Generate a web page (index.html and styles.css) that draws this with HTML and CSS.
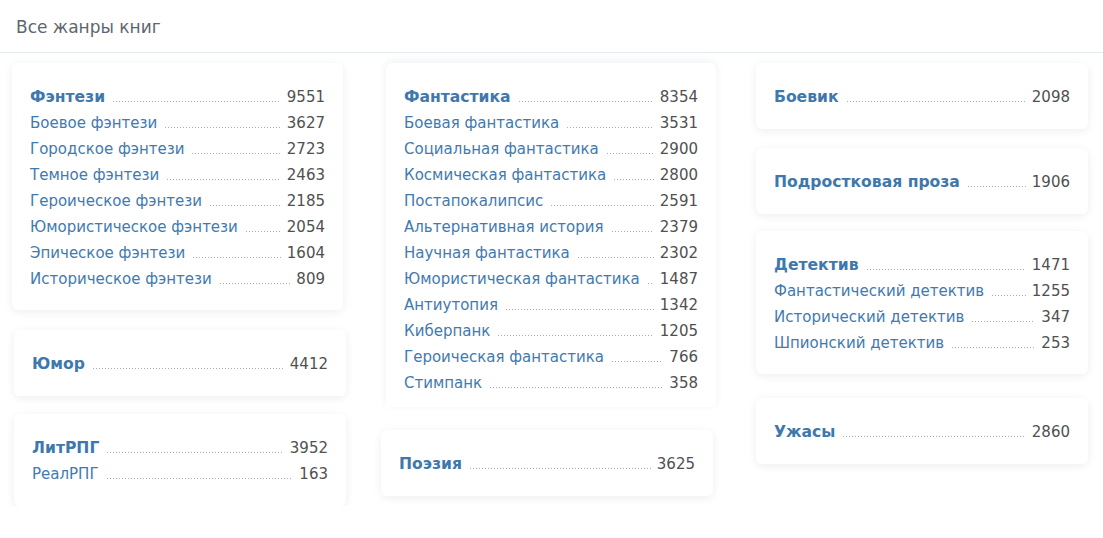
FILE: index.html
```html
<!DOCTYPE html>
<html lang="ru">
<head>
<meta charset="utf-8">
<title>Все жанры книг</title>
<link rel="stylesheet" href="styles.css">
</head>
<body>
<header class="page-head">Все жанры книг</header>
<main class="genres">
  <div class="col col-1">
    <section class="card">
      <div class="row row-main"><a class="name">Фэнтези</a><span class="dots"></span><span class="num">9551</span></div>
      <div class="row"><a class="name">Боевое фэнтези</a><span class="dots"></span><span class="num">3627</span></div>
      <div class="row"><a class="name">Городское фэнтези</a><span class="dots"></span><span class="num">2723</span></div>
      <div class="row"><a class="name">Темное фэнтези</a><span class="dots"></span><span class="num">2463</span></div>
      <div class="row"><a class="name">Героическое фэнтези</a><span class="dots"></span><span class="num">2185</span></div>
      <div class="row"><a class="name">Юмористическое фэнтези</a><span class="dots"></span><span class="num">2054</span></div>
      <div class="row"><a class="name">Эпическое фэнтези</a><span class="dots"></span><span class="num">1604</span></div>
      <div class="row"><a class="name">Историческое фэнтези</a><span class="dots"></span><span class="num">809</span></div>
    </section>
    <section class="card card-single card-humor">
      <div class="row row-main"><a class="name">Юмор</a><span class="dots"></span><span class="num">4412</span></div>
    </section>
    <section class="card card-litrpg">
      <div class="row row-main"><a class="name">ЛитРПГ</a><span class="dots"></span><span class="num">3952</span></div>
      <div class="row"><a class="name">РеалРПГ</a><span class="dots"></span><span class="num">163</span></div>
    </section>
  </div>
  <div class="col col-2">
    <section class="card card-cut">
      <div class="row row-main"><a class="name">Фантастика</a><span class="dots"></span><span class="num">8354</span></div>
      <div class="row"><a class="name">Боевая фантастика</a><span class="dots"></span><span class="num">3531</span></div>
      <div class="row"><a class="name">Социальная фантастика</a><span class="dots"></span><span class="num">2900</span></div>
      <div class="row"><a class="name">Космическая фантастика</a><span class="dots"></span><span class="num">2800</span></div>
      <div class="row"><a class="name">Постапокалипсис</a><span class="dots"></span><span class="num">2591</span></div>
      <div class="row"><a class="name">Альтернативная история</a><span class="dots"></span><span class="num">2379</span></div>
      <div class="row"><a class="name">Научная фантастика</a><span class="dots"></span><span class="num">2302</span></div>
      <div class="row"><a class="name">Юмористическая фантастика</a><span class="dots"></span><span class="num">1487</span></div>
      <div class="row"><a class="name">Антиутопия</a><span class="dots"></span><span class="num">1342</span></div>
      <div class="row"><a class="name">Киберпанк</a><span class="dots"></span><span class="num">1205</span></div>
      <div class="row"><a class="name">Героическая фантастика</a><span class="dots"></span><span class="num">766</span></div>
      <div class="row"><a class="name">Стимпанк</a><span class="dots"></span><span class="num">358</span></div>
    </section>
    <section class="card card-single card-poetry">
      <div class="row row-main"><a class="name">Поэзия</a><span class="dots"></span><span class="num">3625</span></div>
    </section>
  </div>
  <div class="col col-3">
    <section class="card card-single">
      <div class="row row-main"><a class="name">Боевик</a><span class="dots"></span><span class="num">2098</span></div>
    </section>
    <section class="card card-single card-teen">
      <div class="row row-main"><a class="name">Подростковая проза</a><span class="dots"></span><span class="num">1906</span></div>
    </section>
    <section class="card card-detective">
      <div class="row row-main"><a class="name">Детектив</a><span class="dots"></span><span class="num">1471</span></div>
      <div class="row"><a class="name">Фантастический детектив</a><span class="dots"></span><span class="num">1255</span></div>
      <div class="row"><a class="name">Исторический детектив</a><span class="dots"></span><span class="num">347</span></div>
      <div class="row"><a class="name">Шпионский детектив</a><span class="dots"></span><span class="num">253</span></div>
    </section>
    <section class="card card-single card-horror">
      <div class="row row-main"><a class="name">Ужасы</a><span class="dots"></span><span class="num">2860</span></div>
    </section>
  </div>
</main>
</body>
</html>
```
FILE: styles.css
```css
html, body {
  margin: 0;
  padding: 0;
  background: #fff;
}

body {
  font-family: "DejaVu Sans", Verdana, sans-serif;
  color: #555;
  overflow: hidden;
}

.page-head {
  height: 53px;
  box-sizing: border-box;
  padding: 15px 16px 0;
  font-size: 17px;
  line-height: 24px;
  color: #5d6670;
  border-bottom: 1px solid #e4e9ed;
}

.genres {
  display: grid;
  grid-template-columns: 374px 370px 332px;
  padding: 10px 0 0 12px;
  align-items: start;
}

.col {
  display: flex;
  flex-direction: column;
}

.card {
  box-sizing: border-box;
  background: #fff;
  border-radius: 6px;
  box-shadow: 0 2px 10px rgba(0, 0, 0, 0.07);
  padding: 21px 18px 18px;
  font-size: 15px;
}

.card-single { height: 66px; }

.col-1 .card { width: 331px; }
.col-2 .card { width: 330px; }
.col-3 .card { width: 332px; }

.card-humor { margin: 20px 0 0 2px; }
.col-1 .card-humor, .col-1 .card-litrpg { width: 332px; }
.card-litrpg { margin: 18px 0 0 2px; height: 92px; }
.card-cut { border-radius: 6px 6px 0 0; box-shadow: 0 -2px 10px rgba(0, 0, 0, 0.06); height: 344px; }
.col-2 .card-poetry { margin: 23px 0 0 -5px; width: 332px; }
.card-teen { margin-top: 19px; }
.card-detective { margin-top: 17px; }
.card-horror { margin-top: 24px; }

.row {
  display: flex;
  align-items: baseline;
  height: 26px;
  line-height: 26px;
  white-space: nowrap;
}

.name {
  color: #3f7ab0;
  text-decoration: none;
}

.row-main .name {
  font-weight: bold;
  font-size: 15.6px;
  color: #3e78ac;
}

.dots {
  flex: 1;
  min-width: 4px;
  height: 1px;
  margin: 0 6px 0 8px;
  background-image: linear-gradient(to right, #aaa 1px, transparent 1px);
  background-size: 3px 1px;
  background-repeat: repeat-x;
}

.num {
  color: #505050;
}
```
